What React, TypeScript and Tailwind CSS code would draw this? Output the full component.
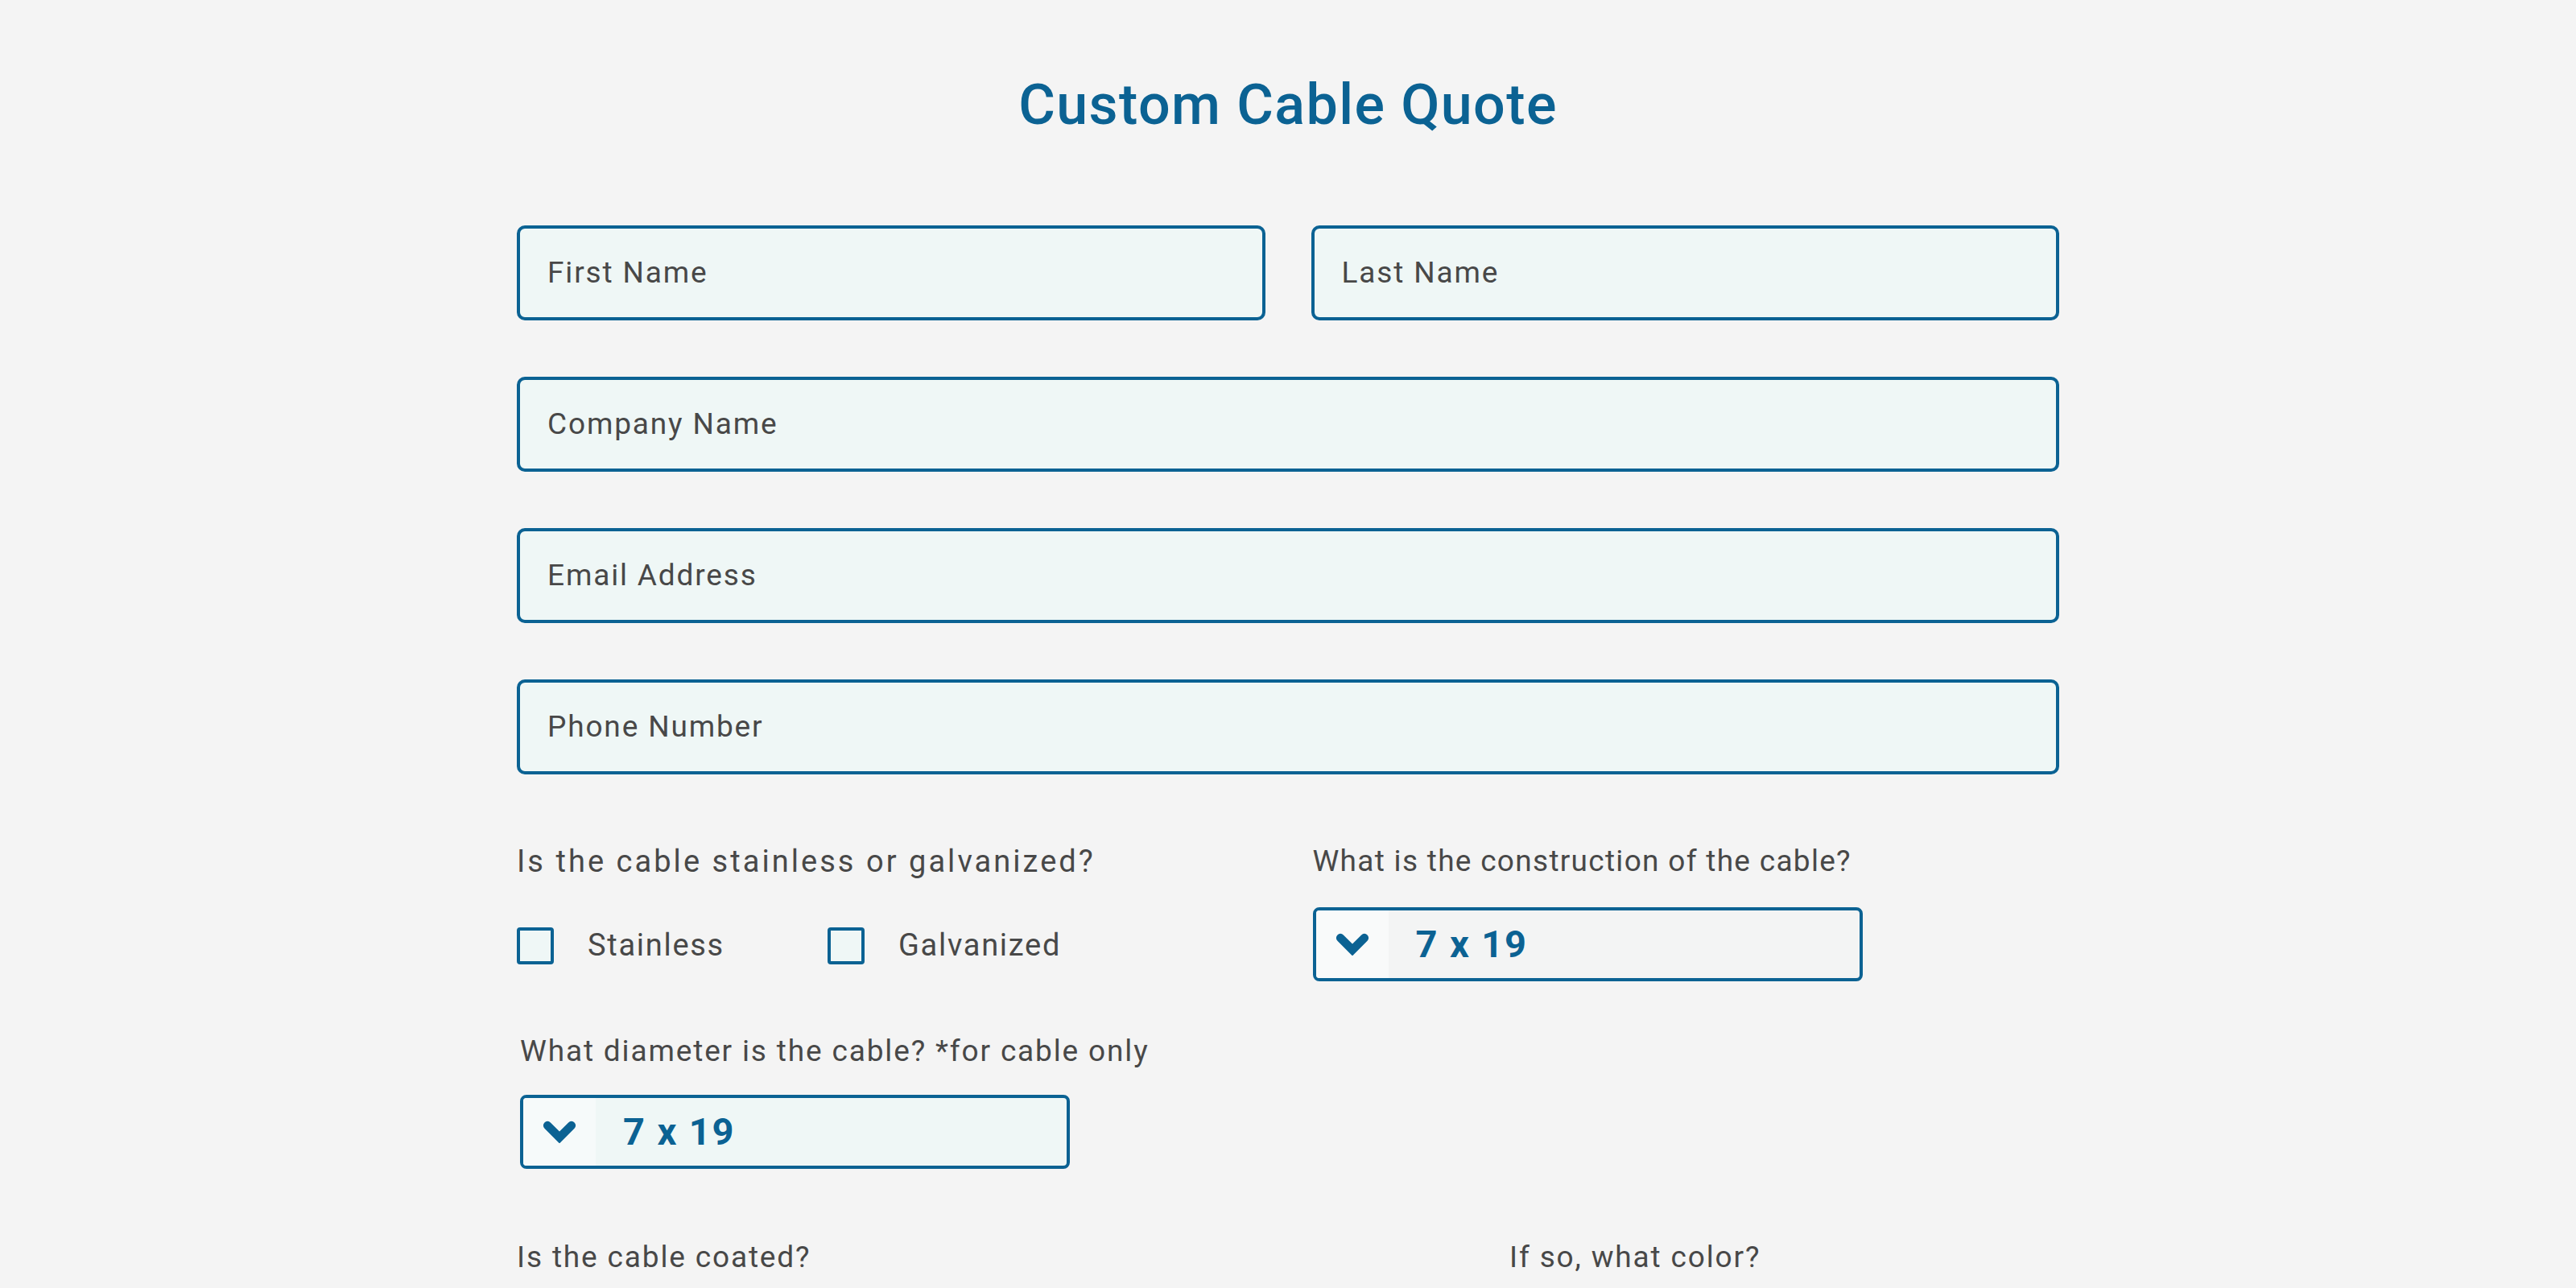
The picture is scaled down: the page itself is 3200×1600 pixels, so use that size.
const font = { fontFamily: 'Roboto, "Noto Sans", sans-serif' }

function TextField({ placeholder }: { placeholder: string }) {
  return (
    <div className="h-[118px] rounded-[10px] border-[4px] border-[#0b6293] bg-[#eff7f6] flex items-center pl-[34px]">
      <span className="text-[37px] tracking-[0.05em] text-[#484848]">{placeholder}</span>
    </div>
  )
}

function Checkbox({ label }: { label: string }) {
  return (
    <label className="w-[386px] flex items-center">
      <span className="w-[46px] h-[46px] rounded-[4px] border-[4px] border-[#0b6293] bg-[#eff7f6]" />
      <span className="ml-[42px] text-[38px] tracking-[0.045em] text-[#484848]">{label}</span>
    </label>
  )
}

function Chevron() {
  return (
    <svg viewBox="0 0 24 16" className="w-[42px] h-[28px]" fill="none">
      <path d="M3.5 3.5 L12 12 L20.5 3.5" stroke="#0b6293" strokeWidth={6} strokeLinecap="round" strokeLinejoin="miter" />
    </svg>
  )
}

function Select({ value, tinted }: { value: string; tinted?: boolean }) {
  return (
    <div
      className={`w-[683px] h-[92px] rounded-[8px] border-[4px] border-[#0b6293] flex overflow-hidden ${
        tinted ? 'bg-[#eff7f6]' : 'bg-[#f3f4f4]'
      }`}
    >
      <div className={`w-[90px] h-full flex items-center justify-center ${tinted ? 'bg-[#f6fafa]' : 'bg-[#f9fafa]'}`}>
        <Chevron />
      </div>
      <div className="flex items-center pl-[34px]">
        <span className="text-[47px] font-bold tracking-[0.04em] text-[#0b6293]">{value}</span>
      </div>
    </div>
  )
}

function Label({ children, className = 'text-[37px] tracking-[0.05em]' }: { children: React.ReactNode; className?: string }) {
  return <p className={`leading-[48px] text-[#484848] ${className}`}>{children}</p>
}

export default function App() {
  return (
    <div className="min-h-screen bg-[#f4f4f4]" style={font}>
      <div className="w-[1916px] mx-auto pt-[88px] pb-[200px]">
        <h1 className="text-center text-[70px] leading-[84px] font-medium tracking-[0.02em] text-[#0b6293]">
          Custom Cable Quote
        </h1>

        <div className="mt-[108px] grid grid-cols-2 gap-x-[57px]">
          <TextField placeholder="First Name" />
          <TextField placeholder="Last Name" />
        </div>
        <div className="mt-[70px] flex flex-col gap-[70px]">
          <TextField placeholder="Company Name" />
          <TextField placeholder="Email Address" />
          <TextField placeholder="Phone Number" />
        </div>

        <div className="mt-[84px] grid grid-cols-2 gap-x-[57px]">
          <div>
            <Label className="text-[38px] tracking-[0.08em]">Is the cable stainless or galvanized?</Label>
            <div className="mt-[52px] flex">
              <Checkbox label="Stainless" />
              <Checkbox label="Galvanized" />
            </div>
          </div>
          <div className="pl-[2px]">
            <Label className="text-[37px] tracking-[0.035em]">What is the construction of the cable?</Label>
            <div className="mt-[33px]">
              <Select value="7 x 19" />
            </div>
          </div>
        </div>

        <div className="mt-[63px] pl-[4px]">
          <Label>What diameter is the cable? *for cable only</Label>
          <div className="mt-[30px]">
            <Select value="7 x 19" tinted />
          </div>
        </div>

        <div className="mt-[86px] flex">
          <div className="w-[1233px]">
            <Label>Is the cable coated?</Label>
          </div>
          <Label>If so, what color?</Label>
        </div>
      </div>
    </div>
  )
}
